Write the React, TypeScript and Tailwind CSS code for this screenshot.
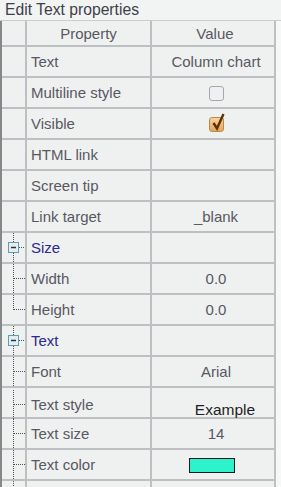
import React from "react";

type Row = {
    label: string;
    kind?: "section" | "child" | "last" | "plain";
    value?: React.ReactNode;
};

function TreeCell({ kind }: { kind?: Row["kind"] }) {
    if (kind === "section") {
        return (
            <svg width="23" height="29" viewBox="0 0 23 29">
                <line x1="11.5" y1="0" x2="11.5" y2="9" stroke="#505050" strokeDasharray="1 1" />
                <line x1="11.5" y1="20" x2="11.5" y2="29" stroke="#505050" strokeDasharray="1 1" />
                <line x1="17" y1="14.5" x2="23" y2="14.5" stroke="#505050" strokeDasharray="1 1" />
                <rect x="6.5" y="9.5" width="10" height="10" fill="#e4eef0" stroke="#5a9fb0" />
                <line x1="9" y1="14.5" x2="14" y2="14.5" stroke="#303040" strokeWidth="1.5" />
            </svg>
        );
    }
    if (kind === "child" || kind === "last") {
        return (
            <svg width="23" height="29" viewBox="0 0 23 29">
                <line
                    x1="11.5"
                    y1="0"
                    x2="11.5"
                    y2={kind === "last" ? 15 : 29}
                    stroke="#505050"
                    strokeDasharray="1 1"
                />
                <line x1="12" y1="14.5" x2="23" y2="14.5" stroke="#505050" strokeDasharray="1 1" />
            </svg>
        );
    }
    return null;
}

function CheckBox({ checked }: { checked?: boolean }) {
    if (!checked) {
        return (
            <div className="w-[15px] h-[15px] rounded-[3px] border border-[#a4a8ac] bg-[#eef0f2]" />
        );
    }
    return (
        <div className="relative w-[15px] h-[15px] rounded-[3px] border border-[#b88a50] bg-gradient-to-b from-[#f8d2a0] to-[#e8a458]">
            <svg
                className="absolute -top-[5px] left-[1px]"
                width="15"
                height="18"
                viewBox="0 0 15 18"
            >
                <path
                    d="M2.5 10 L6 15.5 L12.5 1"
                    fill="none"
                    stroke="#5a3208"
                    strokeWidth="2.4"
                />
            </svg>
        </div>
    );
}

const rows: Row[] = [
    { label: "Text", value: "Column chart" },
    { label: "Multiline style", value: <CheckBox /> },
    { label: "Visible", value: <CheckBox checked /> },
    { label: "HTML link" },
    { label: "Screen tip" },
    { label: "Link target", value: "_blank" },
    { label: "Size", kind: "section" },
    { label: "Width", kind: "child", value: "0.0" },
    { label: "Height", kind: "last", value: "0.0" },
    { label: "Text", kind: "section" },
    { label: "Font", kind: "child", value: "Arial" },
    {
        label: "Text style",
        kind: "child",
        value: (
            <span className="pl-[18px] pt-[9px] text-[15.5px] text-[#1e1e24]">
                Example
            </span>
        ),
    },
    { label: "Text size", kind: "child", value: "14" },
    {
        label: "Text color",
        kind: "child",
        value: (
            <div className="mr-[8px] w-[46px] h-[15px] bg-[#2ef2cc] border border-[#1a1a1a]" />
        ),
    },
    { label: "", kind: "child" },
];

export default function App() {
    return (
        <div
            className="w-[281px] h-[487px] overflow-hidden bg-[#eff1f1] text-[15px] text-[#585862]"
            style={{ fontFamily: '"Liberation Sans", Arial, sans-serif' }}
        >
            <div className="h-[21px] pl-[5px] leading-[20px] text-[15.7px] text-[#40404a] bg-[#f2f3f3] border-b border-[#c9cccd]">
                Edit Text properties
            </div>
            <div className="flex">
                <div className="w-[276px] border-l-2 border-[#85888a]">
                    <div className="grid grid-cols-[25px_125px_124px] h-[26px] border-b-2 border-[#bcc0c2]">
                        <div className="border-r-2 border-[#bcc0c2]" />
                        <div className="border-r-2 border-[#bcc0c2] flex items-center justify-center pt-[2px]">
                            Property
                        </div>
                        <div className="border-r-2 border-[#bcc0c2] flex items-center justify-center pl-[4px] pt-[2px]">
                            Value
                        </div>
                    </div>
                    {rows.map((r, i) => (
                        <div
                            key={i}
                            className="grid grid-cols-[25px_125px_124px] h-[31px] border-b-2 border-[#bcc0c2]"
                        >
                            <div className="border-r-2 border-[#bcc0c2] flex items-center">
                                <TreeCell kind={r.kind} />
                            </div>
                            <div
                                className={
                                    r.kind === "section"
                                        ? "border-r-2 border-[#bcc0c2] flex items-center pl-[4px] pt-[1px] text-[#2b2a8c]"
                                        : "border-r-2 border-[#bcc0c2] flex items-center pl-[4px] pt-[1px]"
                                }
                            >
                                {r.label}
                            </div>
                            <div className="border-r-2 border-[#bcc0c2] flex items-center justify-center pl-[6px] pt-[1px]">
                                {r.value}
                            </div>
                        </div>
                    ))}
                </div>
                <div className="flex-1 bg-[#f6f7f7]" />
            </div>
        </div>
    );
}
